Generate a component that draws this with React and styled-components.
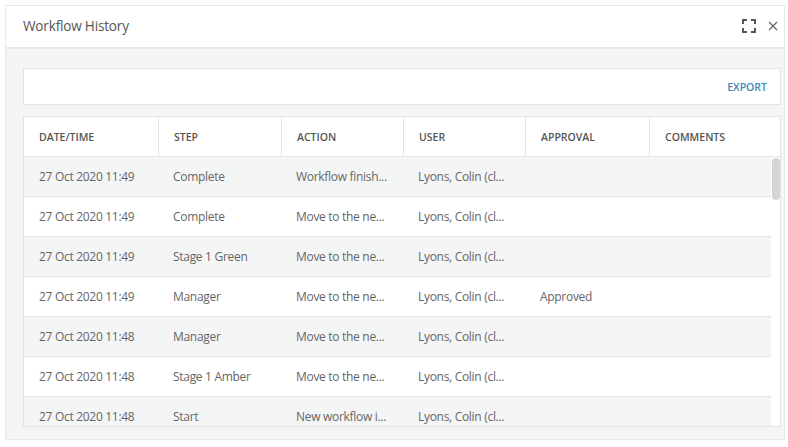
import React from "react";
import styled, { createGlobalStyle } from "styled-components";

const GlobalStyle = createGlobalStyle`
  html, body {
    margin: 0;
    padding: 0;
    background: #ffffff;
    font-family: "Open Sans", "Liberation Sans", sans-serif;
  }
`;

const columns = [
  { key: "date", label: "DATE/TIME" },
  { key: "step", label: "STEP" },
  { key: "action", label: "ACTION" },
  { key: "user", label: "USER" },
  { key: "approval", label: "APPROVAL" },
  { key: "comments", label: "COMMENTS" },
];

const rows = [
  { date: "27 Oct 2020 11:49", step: "Complete", action: "Workflow finish...", user: "Lyons, Colin (cl...", approval: "", comments: "" },
  { date: "27 Oct 2020 11:49", step: "Complete", action: "Move to the ne...", user: "Lyons, Colin (cl...", approval: "", comments: "" },
  { date: "27 Oct 2020 11:49", step: "Stage 1 Green", action: "Move to the ne...", user: "Lyons, Colin (cl...", approval: "", comments: "" },
  { date: "27 Oct 2020 11:49", step: "Manager", action: "Move to the ne...", user: "Lyons, Colin (cl...", approval: "Approved", comments: "" },
  { date: "27 Oct 2020 11:48", step: "Manager", action: "Move to the ne...", user: "Lyons, Colin (cl...", approval: "", comments: "" },
  { date: "27 Oct 2020 11:48", step: "Stage 1 Amber", action: "Move to the ne...", user: "Lyons, Colin (cl...", approval: "", comments: "" },
  { date: "27 Oct 2020 11:48", step: "Start", action: "New workflow i...", user: "Lyons, Colin (cl...", approval: "", comments: "" },
];

const gridCols = "134px 123px 122px 122px 124px 1fr";

export default function App() {
  return (
    <>
      <GlobalStyle />
      <Dialog>
        <Header>
          <Title>Workflow History</Title>
          <HeaderActions>
            <IconButton aria-label="Maximise">
              <svg width="14" height="14" viewBox="0 0 14 14" fill="none" stroke="#555" strokeWidth="2">
                <path d="M1 5V1h4M9 1h4v4M13 9v4H9M5 13H1V9" />
              </svg>
            </IconButton>
            <IconButton aria-label="Close">
              <svg width="10" height="10" viewBox="0 0 10 10" fill="none" stroke="#666" strokeWidth="1.3">
                <path d="M1 1l8 8M9 1L1 9" />
              </svg>
            </IconButton>
          </HeaderActions>
        </Header>
        <Body>
          <Toolbar>
            <ExportLink>EXPORT</ExportLink>
          </Toolbar>
          <Table>
            <HeadRow>
              {columns.map((c) => (
                <HeadCell key={c.key}>{c.label}</HeadCell>
              ))}
            </HeadRow>
            <TableBody>
              <RowList>
                {rows.map((r, i) => (
                  <Row key={i} $striped={i % 2 === 0}>
                    {columns.map((c) => (
                      <Cell key={c.key}>{r[c.key]}</Cell>
                    ))}
                  </Row>
                ))}
              </RowList>
              <ScrollRail>
                <ScrollThumb />
              </ScrollRail>
            </TableBody>
          </Table>
        </Body>
      </Dialog>
    </>
  );
}

const Dialog = styled.div`
  margin: 5px 0 0 5px;
  width: 780px;
  height: 435px;
  border: 1px solid #e8eaea;
  box-sizing: border-box;
  background: #ffffff;
  overflow: hidden;
`;

const Header = styled.div`
  height: 43px;
  border-bottom: 2px solid #e6e8e8;
  box-sizing: border-box;
  display: flex;
  align-items: center;
  justify-content: space-between;
  padding: 0 6px 0 17px;
`;

const Title = styled.div`
  font-size: 13.6px;
  letter-spacing: -0.2px;
  color: #555555;
  margin-top: -2px;
`;

const HeaderActions = styled.div`
  display: flex;
  align-items: center;
  gap: 12px;
  margin-top: -2px;
`;

const IconButton = styled.button`
  border: 0;
  background: transparent;
  padding: 0;
  display: flex;
  align-items: center;
  cursor: pointer;
`;

const Body = styled.div`
  height: 390px;
  box-sizing: border-box;
  background: #f4f5f5;
  padding: 19px 3px 12px 17px;
  display: flex;
  flex-direction: column;
  gap: 11px;
`;

const Toolbar = styled.div`
  height: 37px;
  flex: none;
  box-sizing: border-box;
  background: #ffffff;
  border: 1px solid #e3e5e5;
  display: flex;
  align-items: center;
  justify-content: flex-end;
  padding: 0 13px 0 0;
`;

const ExportLink = styled.span`
  font-size: 10.5px;
  font-weight: 600;
  color: #3f86b8;
  cursor: pointer;
  margin-top: 1px;
`;

const Table = styled.div`
  height: 311px;
  flex: none;
  box-sizing: border-box;
  background: #ffffff;
  border: 1px solid #e3e5e5;
  display: flex;
  flex-direction: column;
  overflow: hidden;
`;

const HeadRow = styled.div`
  display: grid;
  grid-template-columns: ${gridCols};
  height: 40px;
  flex: none;
  border-bottom: 1px solid #e3e5e5;
  box-sizing: border-box;
`;

const HeadCell = styled.div`
  display: flex;
  align-items: center;
  padding-left: 15px;
  font-size: 10.5px;
  font-weight: 600;
  color: #555555;
  border-left: 1px solid #e3e5e5;
  &:first-child {
    border-left: 0;
  }
`;

const TableBody = styled.div`
  flex: 1;
  min-height: 0;
  display: flex;
  overflow: hidden;
`;

const RowList = styled.div`
  flex: 1;
  min-width: 0;
`;

const ScrollRail = styled.div`
  width: 9px;
  flex: none;
  background: #ffffff;
  padding-top: 1px;
  display: flex;
  justify-content: center;
`;

const ScrollThumb = styled.div`
  width: 8px;
  height: 42px;
  border-radius: 4px;
  background: #d4d5d5;
`;

const Row = styled.div`
  display: grid;
  grid-template-columns: ${gridCols};
  height: 40px;
  box-sizing: border-box;
  border-bottom: 1px solid #e3e5e5;
  background: ${(p) => (p.$striped ? "#f4f5f5" : "#ffffff")};
`;

const Cell = styled.div`
  display: flex;
  align-items: center;
  padding-left: 15px;
  font-size: 12px;
  letter-spacing: -0.3px;
  color: #666666;
  white-space: nowrap;
  overflow: hidden;
`;
